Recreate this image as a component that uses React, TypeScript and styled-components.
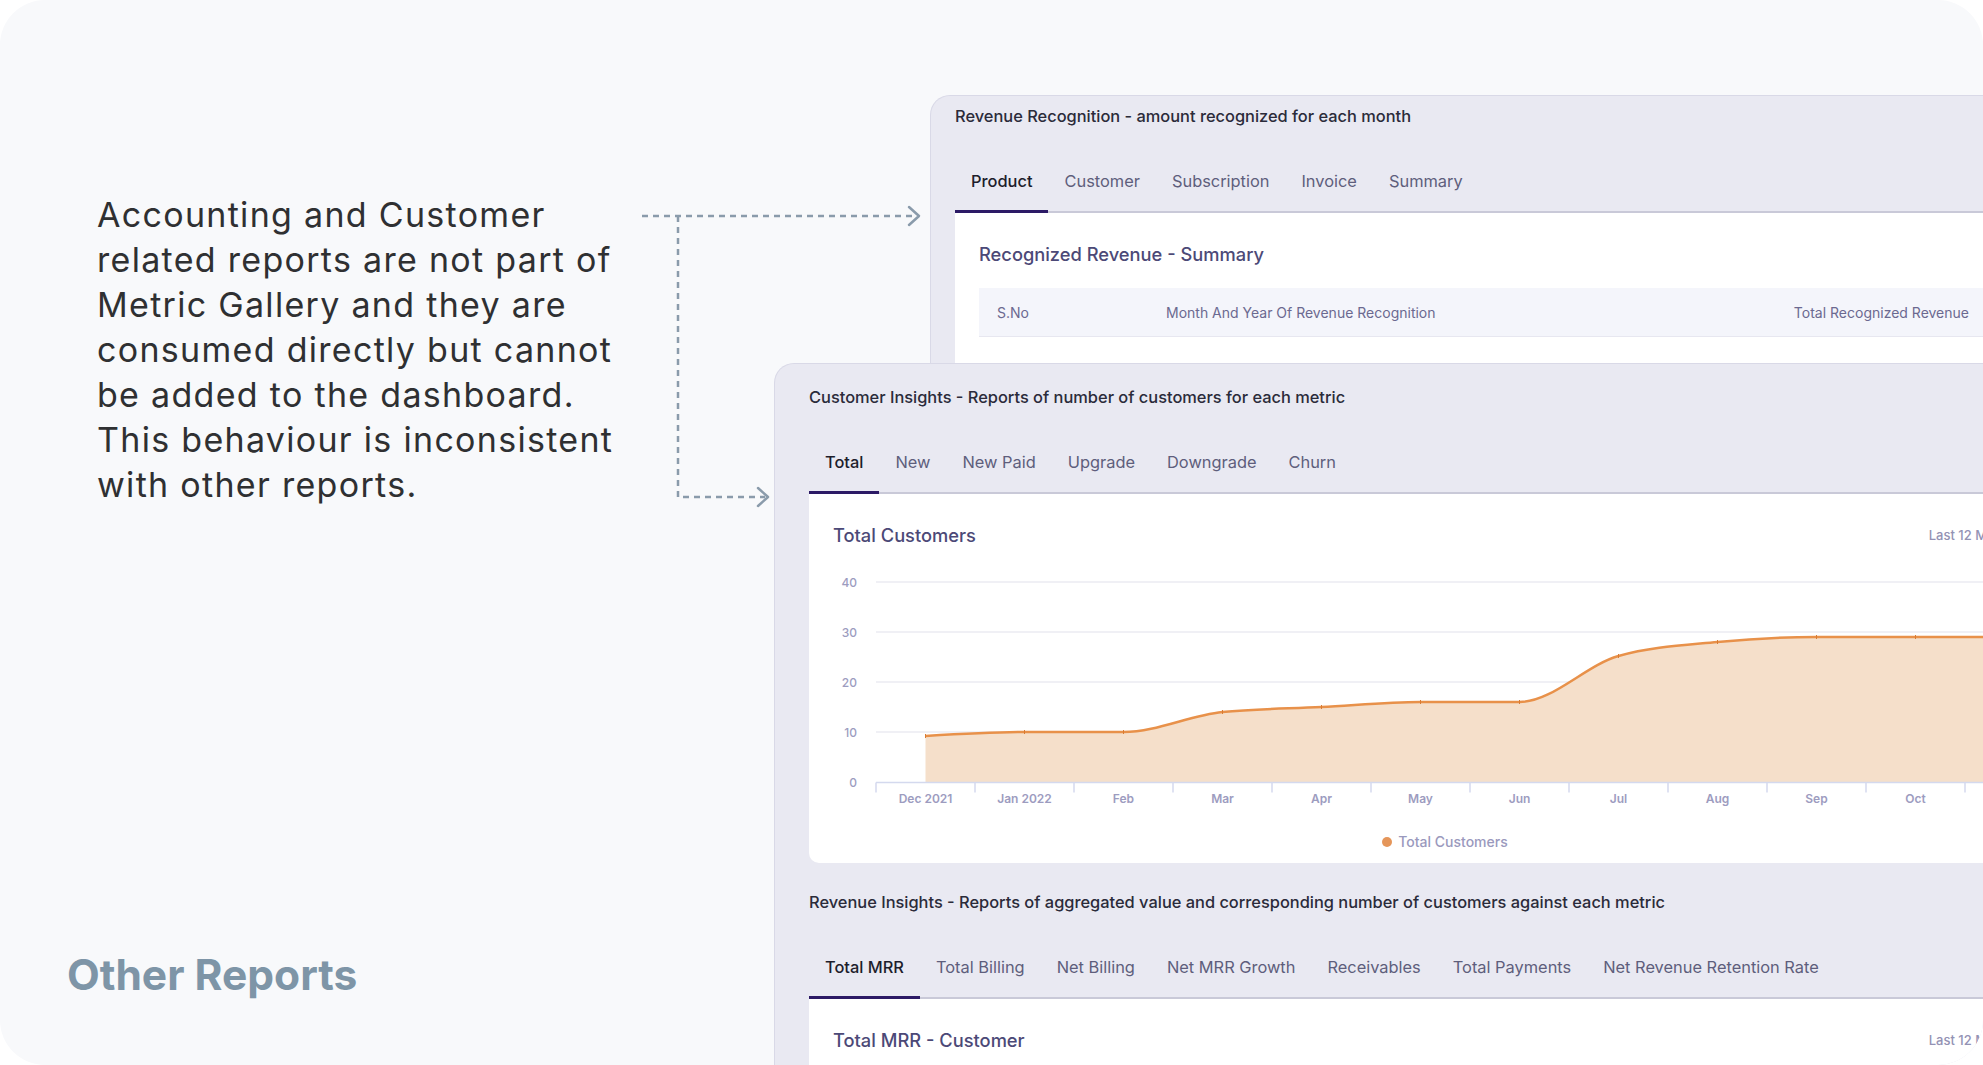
import React from "react";
import styled, { createGlobalStyle } from "styled-components";

const GlobalStyle = createGlobalStyle`
  *, *::before, *::after { box-sizing: border-box; }
  html, body { margin: 0; padding: 0; background: #ffffff; }
  body {
    font-family: Inter, "Noto Sans", "Liberation Sans", sans-serif;
    -webkit-font-smoothing: antialiased;
  }
`;

const Canvas = styled.div`
  position: relative;
  width: 1983px;
  height: 1065px;
  border-radius: 45px;
  background: #f8f9fb;
  overflow: hidden;
  display: flex;
`;

const LeftColumn = styled.div`
  flex: 0 0 774px;
  display: flex;
  flex-direction: column;
  padding: 192px 0 0 67px;
`;

const Lead = styled.p`
  margin: 0 0 0 30px;
  width: max-content;
  font-size: 34px;
  letter-spacing: 1.3px;
  line-height: 45px;
  font-weight: 400;
  color: #2f3032;
`;

const SectionTitle = styled.h2`
  margin: auto 0 64px;
  font-size: 42.5px;
  line-height: 53px;
  font-weight: 700;
  color: #7e95a7;
`;

const Stage = styled.div`
  flex: 1;
  min-width: 0;
  display: grid;
  grid-template-columns: minmax(0, 1fr);
  align-items: start;
  justify-items: start;
`;

const Window = styled.section<{
  $top: number;
  $left: number;
  $width: number;
  $padTop: number;
  $padX: number;
}>`
  grid-area: 1 / 1;
  margin-top: ${(p) => p.$top}px;
  margin-left: ${(p) => p.$left}px;
  width: ${(p) => p.$width}px;
  padding: ${(p) => p.$padTop}px ${(p) => p.$padX}px 0;
  background: #e9e9f2;
  border: 1px solid #d9d9e7;
  border-bottom: none;
  border-radius: 20px 20px 0 0;
`;

const PanelTitle = styled.div<{ $gap?: number }>`
  margin-top: ${(p) => p.$gap ?? 0}px;
  font-size: 16.4px;
  line-height: 22px;
  font-weight: 500;
  color: #2b2b3a;
`;

const TabBar = styled.div`
  display: flex;
  margin-top: 22px;
  box-shadow: inset 0 -2px 0 #c9c9d8;
`;

const Tab = styled.div<{ $active?: boolean }>`
  height: 64px;
  padding: 0 16px;
  display: flex;
  align-items: center;
  font-size: 16.4px;
  white-space: nowrap;
  font-weight: ${(p) => (p.$active ? 500 : 400)};
  color: ${(p) => (p.$active ? "#1d1d2c" : "#5e5e7c")};
  box-shadow: ${(p) => (p.$active ? "inset 0 -3px 0 #2c1a66" : "none")};
`;

const Card = styled.div<{ $padX: number; $minH?: number }>`
  background: #ffffff;
  padding: 27px ${(p) => p.$padX}px 11px;
  border-radius: 0 0 10px 10px;
  min-height: ${(p) => p.$minH ?? 0}px;
`;

const CardHeader = styled.div`
  display: flex;
  align-items: center;
  justify-content: space-between;
  height: 28px;
`;

const CardTitle = styled.div`
  font-size: 18.3px;
  line-height: 28px;
  font-weight: 500;
  color: #4c4977;
`;

const RangeLabel = styled.div`
  font-size: 13px;
  font-weight: 500;
  color: #9392b4;
  white-space: nowrap;
`;

const TableHead = styled.div`
  margin-top: 20px;
  display: grid;
  grid-template-columns: 169px 1fr auto;
  align-items: center;
  height: 49px;
  padding: 0 16px 0 18px;
  background: #f4f5fb;
  border-bottom: 1px solid #e7e7f0;
  font-size: 14px;
  color: #6b6990;
`;

const ChartSvg = styled.svg`
  display: block;
  margin-top: 16px;
  overflow: visible;
`;

const Legend = styled.div`
  display: flex;
  align-items: center;
  justify-content: center;
  gap: 6px;
  margin-top: 7px;
  padding-left: 35px;
  line-height: 20px;
  font-size: 14px;
  font-weight: 500;
  color: #9a99bd;
`;

const LegendDot = styled.span`
  width: 10px;
  height: 10px;
  border-radius: 50%;
  background: #e5965a;
`;

const Connectors = styled.svg`
  position: absolute;
  inset: 0;
  pointer-events: none;
`;

type Pt = [number, number];

function monotonePath(pts: Pt[]): string {
  const n = pts.length;
  const h: number[] = [];
  const m: number[] = [];
  for (let i = 0; i < n - 1; i++) {
    h[i] = pts[i + 1][0] - pts[i][0];
    m[i] = (pts[i + 1][1] - pts[i][1]) / h[i];
  }
  const t: number[] = new Array(n).fill(0);
  for (let i = 1; i < n - 1; i++) {
    const s0 = m[i - 1];
    const s1 = m[i];
    const p = (s0 * h[i] + s1 * h[i - 1]) / (h[i - 1] + h[i]);
    t[i] =
      (Math.sign(s0) + Math.sign(s1)) *
        Math.min(Math.abs(s0), Math.abs(s1), 0.5 * Math.abs(p)) || 0;
  }
  t[0] = (3 * m[0] - t[1]) / 2;
  t[n - 1] = (3 * m[n - 2] - t[n - 2]) / 2;
  let d = `M${pts[0][0]},${pts[0][1]}`;
  for (let i = 0; i < n - 1; i++) {
    const [x0, y0] = pts[i];
    const [x1, y1] = pts[i + 1];
    const dx = h[i] / 3;
    d += ` C${x0 + dx},${y0 + t[i] * dx} ${x1 - dx},${y1 - t[i + 1] * dx} ${x1},${y1}`;
  }
  return d;
}

const months = ["Dec 2021", "Jan 2022", "Feb", "Mar", "Apr", "May", "Jun", "Jul", "Aug", "Sep", "Oct", "Nov"];
const values = [9.2, 10, 10, 14, 15, 16, 16, 25.2, 28, 29, 29, 29];

const CHART_W = 1187;
const CHART_H = 260;
const AXIS_Y = 217.5;
const PLOT_X = 43;
const STEP = 99;

function CustomerChart() {
  const yOf = (v: number) => 217 - 5 * v;
  const pts: Pt[] = values.map((v, i) => [PLOT_X + STEP / 2 + STEP * i, yOf(v)]);
  const line = monotonePath(pts);
  const area = `${line} L${pts[pts.length - 1][0]},${AXIS_Y} L${pts[0][0]},${AXIS_Y} Z`;
  const grid = [40, 30, 20, 10];
  return (
    <ChartSvg width={CHART_W} height={CHART_H} viewBox={`0 0 ${CHART_W} ${CHART_H}`}>
      {grid.map((g) => (
        <line key={g} x1={PLOT_X} x2={CHART_W + 60} y1={yOf(g)} y2={yOf(g)} stroke="#ebebf2" strokeWidth={1.5} />
      ))}
      {[40, 30, 20, 10, 0].map((g) => (
        <text
          key={g}
          x={24}
          y={yOf(g)}
          textAnchor="end"
          dominantBaseline="central"
          fontSize={12}
          fontWeight={500}
          fill="#9d9cbf"
          fontFamily="Inter, sans-serif"
        >
          {g}
        </text>
      ))}
      <path d={area} fill="#f5dfca" />
      <path d={line} fill="none" stroke="#e8914a" strokeWidth={2.5} />
      {pts.map(([x, y], i) => (
        <line key={i} x1={x} x2={x} y1={y - 2} y2={y + 2} stroke="#d97c34" strokeWidth={1} />
      ))}
      <line x1={PLOT_X} x2={CHART_W + 60} y1={AXIS_Y} y2={AXIS_Y} stroke="#d4d9ee" strokeWidth={1.5} />
      {Array.from({ length: 13 }).map((_, k) => (
        <line
          key={k}
          x1={PLOT_X + STEP * k}
          x2={PLOT_X + STEP * k}
          y1={AXIS_Y}
          y2={AXIS_Y + 10}
          stroke="#d4d9ee"
          strokeWidth={1.5}
        />
      ))}
      {months.map((m, i) => (
        <text
          key={m}
          x={PLOT_X + STEP / 2 + STEP * i}
          y={233}
          textAnchor="middle"
          dominantBaseline="central"
          fontSize={12}
          fontWeight={600}
          fill="#9d9cbf"
          fontFamily="Inter, sans-serif"
        >
          {m}
        </text>
      ))}
    </ChartSvg>
  );
}

function ConnectorDrawing() {
  const c = "#8a9bab";
  return (
    <Connectors width={1983} height={1065} viewBox="0 0 1983 1065">
      <g stroke={c} strokeWidth={2.5} fill="none">
        <path d="M642,216 H916" strokeDasharray="6 5" />
        <path d="M678,216 V497 H765" strokeDasharray="6 5" />
        <path d="M909,207 L919,216 L909,225" strokeLinecap="round" strokeLinejoin="round" />
        <path d="M758,488 L768,497 L758,506" strokeLinecap="round" strokeLinejoin="round" />
      </g>
    </Connectors>
  );
}

const revenueTabs = ["Product", "Customer", "Subscription", "Invoice", "Summary"];
const customerTabs = ["Total", "New", "New Paid", "Upgrade", "Downgrade", "Churn"];
const insightTabs = [
  "Total MRR",
  "Total Billing",
  "Net Billing",
  "Net MRR Growth",
  "Receivables",
  "Total Payments",
  "Net Revenue Retention Rate",
];

const leadLines = [
  "Accounting and Customer",
  "related reports are not part of",
  "Metric Gallery and they are",
  "consumed directly but cannot",
  "be added to the dashboard.",
  "This behaviour is inconsistent",
  "with other reports.",
];

function Tabs({ items }: { items: string[] }) {
  return (
    <TabBar>
      {items.map((t, i) => (
        <Tab key={t} $active={i === 0}>
          {t}
        </Tab>
      ))}
    </TabBar>
  );
}

export default function App() {
  return (
    <>
      <GlobalStyle />
      <Canvas>
        <LeftColumn>
          <Lead>
            {leadLines.map((l, i) => (
              <React.Fragment key={i}>
                {l}
                {i < leadLines.length - 1 && <br />}
              </React.Fragment>
            ))}
          </Lead>
          <SectionTitle>Other Reports</SectionTitle>
        </LeftColumn>
        <Stage>
          <Window $top={95} $left={156} $width={1104} $padTop={9} $padX={24}>
            <PanelTitle>Revenue Recognition - amount recognized for each month</PanelTitle>
            <Tabs items={revenueTabs} />
            <Card $padX={24} $minH={260}>
              <CardHeader>
                <CardTitle>Recognized Revenue - Summary</CardTitle>
              </CardHeader>
              <TableHead>
                <span>S.No</span>
                <span>Month And Year Of Revenue Recognition</span>
                <span>Total Recognized Revenue</span>
              </TableHead>
            </Card>
          </Window>
          <Window $top={363} $left={0} $width={1307} $padTop={22} $padX={34}>
            <PanelTitle>Customer Insights - Reports of number of customers for each metric</PanelTitle>
            <Tabs items={customerTabs} />
            <Card $padX={24}>
              <CardHeader>
                <CardTitle>Total Customers</CardTitle>
                <RangeLabel>Last 12 Months</RangeLabel>
              </CardHeader>
              <CustomerChart />
              <Legend>
                <LegendDot />
                Total Customers
              </Legend>
            </Card>
            <PanelTitle $gap={28}>
              Revenue Insights - Reports of aggregated value and corresponding number of customers against each
              metric
            </PanelTitle>
            <Tabs items={insightTabs} />
            <Card $padX={24} $minH={160}>
              <CardHeader>
                <CardTitle>Total MRR - Customer</CardTitle>
                <RangeLabel>Last 12 Months</RangeLabel>
              </CardHeader>
            </Card>
          </Window>
        </Stage>
        <ConnectorDrawing />
      </Canvas>
    </>
  );
}
